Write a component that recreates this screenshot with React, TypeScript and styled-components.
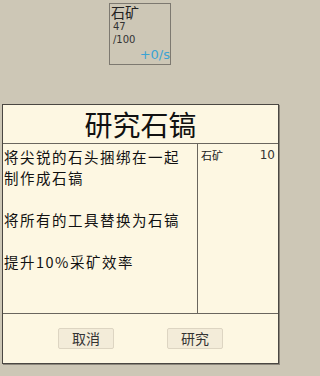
import React from "react";
import styled, { createGlobalStyle } from "styled-components";

const GlobalStyle = createGlobalStyle`
  html, body {
    margin: 0;
    padding: 0;
    background: #cdc7b6;
    font-family: "Noto Sans CJK SC", "Noto Sans", sans-serif;
    color: #222;
  }
`;

const Page = styled.div`
  width: 280px;
  height: 376px;
  overflow: hidden;
  display: flex;
  flex-direction: column;
  align-items: center;
  padding-top: 3px;
  box-sizing: border-box;
`;

const ResourceCard = styled.div`
  width: 62px;
  height: 62px;
  box-sizing: border-box;
  border: 1px solid #7d7970;
  display: flex;
  flex-direction: column;
  padding: 0 0 0 1px;
`;

const CardName = styled.div`
  font-size: 14px;
  line-height: 16px;
  color: #222;
`;

const CardNum = styled.div`
  font-family: "DejaVu Sans", sans-serif;
  font-size: 10px;
  line-height: 13px;
  padding-left: 2px;
  color: #333;
`;

const CardRate = styled.div`
  margin-top: auto;
  align-self: flex-end;
  font-family: "DejaVu Sans", sans-serif;
  font-size: 13px;
  line-height: 16px;
  color: #3ba3d4;
  padding-bottom: 1px;
`;

const Dialog = styled.div`
  margin-top: 39px;
  width: 277px;
  margin-left: 1px;
  height: 260px;
  box-sizing: border-box;
  background: #fdf7e2;
  border: 1px solid #4a4742;
  box-shadow: 1px 1px 0 #8c877c;
  display: flex;
  flex-direction: column;
`;

const Title = styled.div`
  height: 38px;
  border-bottom: 1px solid #6a665e;
  font-size: 28px;
  line-height: 38px;
  text-align: center;
  color: #111;
`;

const Body = styled.div`
  height: 169px;
  display: flex;
  border-bottom: 1px solid #6a665e;
`;

const Description = styled.div`
  width: 193px;
  border-right: 1px solid #6a665e;
  padding: 2px 0 0 1px;
  font-size: 14.5px;
  line-height: 21px;
  letter-spacing: 1.5px;
  color: #111;
`;

const CostList = styled.div`
  flex: 1;
  padding: 3px 3px 0 3px;
`;

const CostRow = styled.div`
  display: flex;
  justify-content: space-between;
  align-items: center;
  line-height: 16px;
`;

const CostName = styled.span`
  font-size: 11px;
  color: #222;
`;

const CostValue = styled.span`
  font-family: "DejaVu Sans", sans-serif;
  font-size: 12px;
  color: #333;
`;

const Footer = styled.div`
  flex: 1;
  display: flex;
  justify-content: center;
  align-items: center;
  gap: 53px;
`;

const Button = styled.button`
  width: 56px;
  height: 21px;
  padding: 0;
  background: #f3ecd9;
  border: 1px solid #ddd5c2;
  border-radius: 2px;
  font-family: "Noto Sans CJK SC", sans-serif;
  font-size: 14px;
  line-height: 19px;
  color: #333;
`;

export default function App() {
  return (
    <>
      <GlobalStyle />
      <Page>
        <ResourceCard>
          <CardName>石矿</CardName>
          <CardNum>47</CardNum>
          <CardNum>/100</CardNum>
          <CardRate>+0/s</CardRate>
        </ResourceCard>
        <Dialog>
          <Title>研究石镐</Title>
          <Body>
            <Description>
              将尖锐的石头捆绑在一起
              <br />
              制作成石镐
              <br />
              <br />
              将所有的工具替换为石镐
              <br />
              <br />
              提升10%采矿效率
            </Description>
            <CostList>
              <CostRow>
                <CostName>石矿</CostName>
                <CostValue>10</CostValue>
              </CostRow>
            </CostList>
          </Body>
          <Footer>
            <Button>取消</Button>
            <Button>研究</Button>
          </Footer>
        </Dialog>
      </Page>
    </>
  );
}
